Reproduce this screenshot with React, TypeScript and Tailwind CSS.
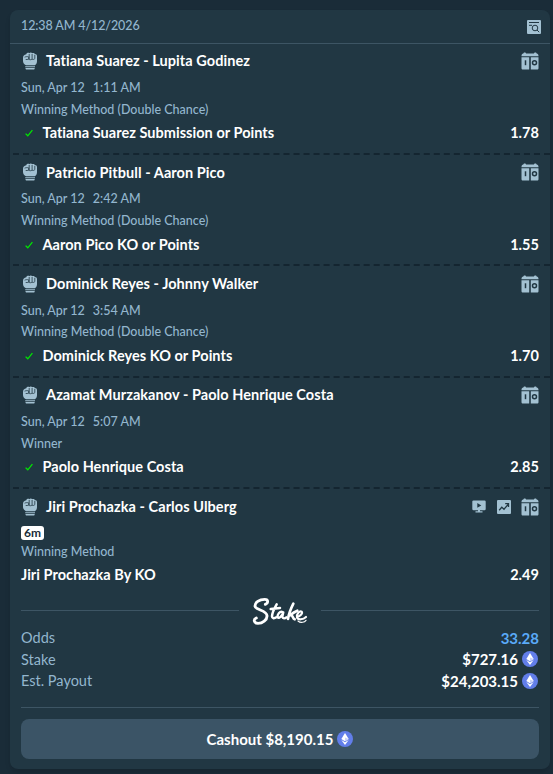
import React from 'react'
import clsx from 'clsx'

const bets = [
  {
    match: 'Tatiana Suarez - Lupita Godinez',
    date: 'Sun, Apr 12',
    time: '1:11 AM',
    market: 'Winning Method (Double Chance)',
    pick: 'Tatiana Suarez Submission or Points',
    odds: '1.78',
  },
  {
    match: 'Patricio Pitbull - Aaron Pico',
    date: 'Sun, Apr 12',
    time: '2:42 AM',
    market: 'Winning Method (Double Chance)',
    pick: 'Aaron Pico KO or Points',
    odds: '1.55',
  },
  {
    match: 'Dominick Reyes - Johnny Walker',
    date: 'Sun, Apr 12',
    time: '3:54 AM',
    market: 'Winning Method (Double Chance)',
    pick: 'Dominick Reyes KO or Points',
    odds: '1.70',
  },
  {
    match: 'Azamat Murzakanov - Paolo Henrique Costa',
    date: 'Sun, Apr 12',
    time: '5:07 AM',
    market: 'Winner',
    pick: 'Paolo Henrique Costa',
    odds: '2.85',
  },
]

function FistIcon() {
  return (
    <svg width="16" height="18" viewBox="0 0 16 18" className="ml-px mr-2 shrink-0" fill="#a3c1d2" aria-hidden>
      <path d="M4.3 2.2C4.5.9 6.7.4 7.3 1.2 8 .3 9.7.4 10.2 1.2c1-.6 2.4-.2 2.7.8 1.3 0 2.1.8 2.1 2v5.2c0 1.8-.9 3.2-2 4H4c-1.9-1-3-2.5-3-4.5V6c0-2.2 1.2-3.5 3.3-3.8Z" />
      <path d="M3.2 14.2h9.8v1H3.2ZM3.4 15.9h9.4l-.3 1c-.1.4-.4.6-.9.6h-7c-.5 0-.8-.2-.9-.6Z" />
      <path
        d="M2.6 5.2c1.4-.7 2.8-.7 4.1-.3v2.3c-1 .3-2 .4-3 .3M7.2 2v5.2M10.1 2v5.2M12.8 2.8v3.8M6.8 7.2c1 .7 2.2.7 3.2 0 1 .5 2 .3 2.8-.5"
        fill="none"
        stroke="#213743"
        strokeWidth=".8"
      />
    </svg>
  )
}

function OctagonIcon() {
  return (
    <svg width="18" height="18" viewBox="0 0 18 18" fill="#a3c1d2" aria-hidden>
      <path d="M2.3 1.6 3 .5h1.4l.7 1.1h7.8l.7-1.1H15l.7 1.1c1.1.2 1.8 1 1.8 2.3v.3H.5v-.3c0-1.3.7-2.1 1.8-2.3Z" />
      <path d="M.5 5.2h7.7v12.3H2c-1 0-1.5-.5-1.5-1.5ZM9.8 5.2h7.7V16c0 1-.5 1.5-1.5 1.5H9.8Z" />
      <path d="M4.5 8.3v4.9" stroke="#213743" strokeWidth="1.5" />
      <circle cx="13.5" cy="10.7" r="2" fill="none" stroke="#213743" strokeWidth="1.5" />
    </svg>
  )
}

function PreviewIcon() {
  return (
    <svg width="14" height="14" viewBox="0 0 14 14" aria-hidden>
      <rect width="14" height="14" rx="1" fill="#a3c1d2" />
      <g fill="none" stroke="#213743">
        <path d="M2 2.5h10M2 5.3h3" />
        <circle cx="8" cy="8" r="2.8" />
        <path d="m10 10 2.2 2.2" />
      </g>
    </svg>
  )
}

function StreamIcon() {
  return (
    <svg width="14" height="13" viewBox="0 0 14 13" fill="#a3c1d2" aria-hidden>
      <rect x=".3" y=".5" width="13.4" height="9.8" rx="1.2" />
      <path d="M6 10h2v1.3h2.5v1.2h-7v-1.2H6Z" />
      <path d="m5.3 3 4 2.4-4 2.4Z" fill="#213743" />
    </svg>
  )
}

function StatsIcon() {
  return (
    <svg width="14" height="14" viewBox="0 0 14 14" aria-hidden>
      <rect width="14" height="14" rx="1" fill="#a3c1d2" />
      <path d="m2.2 10.2 2.6-3 2.2 2 4.2-4.8M8.2 3.7h3.3V7" fill="none" stroke="#213743" strokeWidth="1.3" />
    </svg>
  )
}

function CheckIcon() {
  return (
    <svg width="8" height="8" viewBox="0 0 8 8" className="ml-[3.5px] mr-2.5" aria-hidden>
      <path d="M.6 4.6 2.8 6.8 7.4 1.2" fill="none" stroke="#00e701" strokeWidth="1.3" />
    </svg>
  )
}

function EthIcon() {
  return (
    <svg width="16" height="16" viewBox="0 0 16 16" className="shrink-0" aria-hidden>
      <circle cx="8" cy="8" r="8" fill="#627eea" />
      <path d="m8 2 3.7 6.1L8 10.3 4.3 8.1Z" fill="#fff" />
      <path d="M8 11.2 11.7 9 8 14.1 4.3 9Z" fill="#fff" />
      <path d="m8 6.4 3.7 1.7L8 10.3Z" fill="#c9d2f8" />
    </svg>
  )
}

function Logo() {
  return (
    <svg width="56" height="28" viewBox="156 36 168 84" fill="none" stroke="#fff" strokeLinecap="round" aria-label="Stake">
      <g strokeWidth="8" strokeLinejoin="round">
        <path
          d="M196 58C205 54 206 43 194 43 178 43 164 53 165 64 167 76 200 75 201 92 202 105 187 115 174 115 160 114 160 103 169 99"
          strokeWidth="8.5"
        />
        <path d="M230 58C222 72 216 85 216 94 216 101 223 101 229 97M212 72 240 69" strokeWidth="7.5" />
        <path d="M248 81C239 78 231 88 233 97 237 103 246 93 250 82L247 95C248 102 255 101 259 97" strokeWidth="7" />
        <path d="M280 56C272 72 266 88 264 102M292 77C284 80 276 86 270 91 280 88 277 101 284 103" />
        <path d="M291 95C300 95 309 85 305 80 299 76 289 87 291 97 294 106 310 104 318 96" strokeWidth="6.5" />
      </g>
      <path d="M294 108C302 115 314 112 318 106" strokeWidth="3.5" />
    </svg>
  )
}

function Match({ name, live }: { name: string; live?: boolean }) {
  return (
    <div className="flex h-[34px] items-center">
      <FistIcon />
      <span className="text-[14.5px] font-bold tracking-[0.06px] text-white">{name}</span>
      <div className="ml-auto flex items-center">
        {live && (
          <div className="mr-2.5 flex items-center gap-[11px]">
            <StreamIcon />
            <StatsIcon />
          </div>
        )}
        <OctagonIcon />
      </div>
    </div>
  )
}

function Pick({ name, odds, won }: { name: string; odds: string; won?: boolean }) {
  return (
    <div className="flex h-6 items-center text-[14.5px] font-bold tracking-[0.04px] text-white">
      {won && <CheckIcon />}
      <span>{name}</span>
      <span className="ml-auto">{odds}</span>
    </div>
  )
}

function Total({ label, value, blue }: { label: string; value: string; blue?: boolean }) {
  return (
    <div className="flex h-[21.7px] items-center text-[14.5px]">
      <span>{label}</span>
      <span className={clsx('ml-auto text-[15px] font-bold', blue ? 'text-[#5aaaf8]' : 'mr-1 text-white')}>{value}</span>
      {!blue && (
        <div className="mr-px">
          <EthIcon />
        </div>
      )}
    </div>
  )
}

export default function App() {
  return (
    <div className="h-[774px] w-[553px] overflow-hidden bg-[#1a2c38] pl-2.5 pt-2.5 font-['Lato',sans-serif] text-[#93b6ce]">
      <div className="h-[759px] w-[540px] rounded-lg bg-[#213743] shadow-md">
        <div className="flex h-[34px] items-center justify-between border-b border-[#3d5564] pl-[11px] pr-[9px] text-[12.5px] font-medium">
          <span className="tracking-[-0.1px]">12:38 AM 4/12/2026</span>
          <PreviewIcon />
        </div>

        {bets.map((bet) => (
          <div key={bet.match} className="h-[111.4px]">
            <div className="px-[11px]">
              <Match name={bet.match} />
              <div className="flex h-[20.6px] items-center gap-2 text-[12.5px] font-medium">
                <span>{bet.date}</span>
                <span>{bet.time}</span>
              </div>
              <div className="flex h-[22.6px] items-center text-[12.5px] font-medium">{bet.market}</div>
              <Pick name={bet.pick} odds={bet.odds} won />
            </div>
            <div className="ml-[3px] mt-[7.8px] border-t-2 border-dashed border-[#142530]" />
          </div>
        ))}

        <div className="px-[11px] pt-[0.4px]">
          <Match name="Jiri Prochazka - Carlos Ulberg" live />
          <div className="flex h-[18px] items-center">
            <span className="flex h-3.5 w-[23px] items-center justify-center rounded-[3px] bg-white text-xs font-bold text-[#1a2c38]">
              6m
            </span>
          </div>
          <div className="flex h-[21px] items-center text-[12.5px] font-medium">Winning Method</div>
          <Pick name="Jiri Prochazka By KO" odds="2.49" />

          <div className="mt-2.5 flex h-7 items-center">
            <div className="h-px flex-1 bg-[#3d5564]" />
            <div className="mx-[13px]">
              <Logo />
            </div>
            <div className="h-px flex-1 bg-[#3d5564]" />
          </div>

          <div className="mt-[2px]">
            <Total label="Odds" value="33.28" blue />
            <Total label="Stake" value="$727.16" />
            <Total label="Est. Payout" value="$24,203.15" />
          </div>

          <div className="mt-[15px] h-px bg-[#3d5564]" />
          <button className="mt-[11px] flex h-10 w-full items-center justify-center gap-1 rounded-lg bg-[#3b5466] text-[15px] font-bold text-white">
            Cashout $8,190.15
            <EthIcon />
          </button>
        </div>
      </div>
    </div>
  )
}
